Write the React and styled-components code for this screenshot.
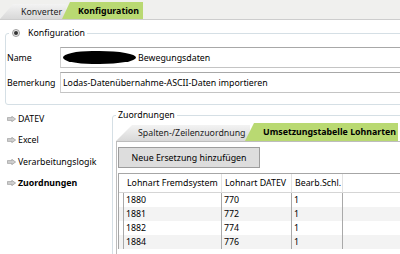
import React from 'react';
import styled, { createGlobalStyle } from 'styled-components';

const Global = createGlobalStyle`
  html, body { margin: 0; padding: 0; background: #fff; }
  body { font-family: "Noto Sans", "Open Sans", sans-serif; font-size: 8.8px; color: #000; overflow: hidden; }
  * { box-sizing: border-box; }
`;

const Screen = styled.div`
  width: 400px;
  height: 254px;
  overflow: hidden;
  display: flex;
  flex-direction: column;
  background: #fff;
`;

const TabStrip = styled.div`
  flex: none;
  height: ${p => p.$h}px;
  display: flex;
  align-items: flex-end;
  background: ${p => p.$bg || 'transparent'};
  border-bottom: ${p => (p.$line ? '1px solid #cdcdcd' : 'none')};
`;

const Tab = styled.div`
  flex: none;
  height: ${p => p.$h}px;
  width: ${p => p.$w}px;
  margin-left: ${p => p.$ml || 0}px;
  padding-left: ${p => p.$pl}px;
  display: flex;
  align-items: center;
  white-space: nowrap;
  clip-path: polygon(${p => p.$slant}px 0, 100% 0, 100% 100%, 0 100%);
  background: ${p => (p.$active ? '#b9d972' : 'linear-gradient(#f3f3f3, #d8d8d8)')};
  font-weight: ${p => (p.$active ? 700 : 400)};
  color: ${p => (p.$active ? '#000' : '#222')};
`;

const Group = styled.fieldset`
  flex: none;
  min-width: 0;
  margin: ${p => p.$margin};
  padding: ${p => p.$padding};
  border: 1px solid #d5dfe5;
  border-radius: 3px;
`;

const PanelGroup = styled(Group)`
  flex: 1;
  display: flex;
  flex-direction: column;
`;

const Legend = styled.legend`
  display: flex;
  align-items: center;
  height: 14px;
  line-height: 14px;
  margin-left: ${p => p.$ml}px;
  padding: ${p => p.$pad};
  white-space: nowrap;
`;

const EyeIcon = styled.svg`
  width: 8px;
  height: 8px;
  margin-right: 8px;
  flex: none;
`;

const FormRows = styled.div`
  display: flex;
  flex-direction: column;
  gap: 4px;
`;

const FormRow = styled.div`
  display: flex;
  align-items: center;
  height: 21px;
`;

const Label = styled.div`
  width: 53px;
  flex: none;
`;

const Field = styled.div`
  flex: 1;
  height: 100%;
  display: flex;
  align-items: center;
  padding-left: 2px;
  border: 1px solid #d0d0d0;
  border-top-color: #a8a8a8;
  border-bottom-color: #c4c4c4;
  white-space: nowrap;
  background: #fff;
`;

const Redacted = styled.span`
  display: inline-block;
  width: 73px;
  height: 13px;
  background: #000;
  border-radius: 40% 50% 50% 40% / 50%;
  margin-right: 2px;
  flex: none;
`;

const Body = styled.div`
  flex: 1;
  display: flex;
  margin-top: 3px;
  min-height: 0;
`;

const Nav = styled.nav`
  width: 112px;
  flex: none;
  display: flex;
  flex-direction: column;
`;

const NavItem = styled.div`
  height: 21.5px;
  display: flex;
  align-items: center;
  padding-left: 7px;
  gap: 2px;
  font-weight: ${p => (p.$current ? 700 : 400)};
  white-space: nowrap;
`;

const ArrowIcon = styled.svg`
  width: 9px;
  height: 6px;
  flex: none;
`;

const TabPanel = styled.div`
  border-left: 1px solid #bdbdbd;
  border-top: 1px solid #bdbdbd;
  padding: 5px 0 0 1px;
  display: flex;
  flex-direction: column;
  align-items: flex-start;
  gap: 5px;
  flex: 1;
`;

const Button = styled.button`
  width: 142px;
  height: 21px;
  font: inherit;
  color: #000;
  background: #dddddd;
  border: 1px solid #9d9d9d;
  padding: 0;
  white-space: nowrap;
`;

const Grid = styled.div`
  align-self: stretch;
  border-left: 1px solid #a6a6a6;
  border-top: 1px solid #a6a6a6;
  display: grid;
  grid-template-columns: 5px 98px 70px 51px 1fr;
`;

const HeadCell = styled.div`
  height: 19px;
  display: flex;
  align-items: center;
  padding-left: 3px;
  white-space: nowrap;
  overflow: hidden;
  border-bottom: 1px solid #d5d5d5;
  border-right: ${p => (p.$sep ? '1px solid #e3e3e3' : 'none')};
`;

const Cell = styled.div`
  height: 14px;
  display: flex;
  align-items: center;
  padding-left: 2px;
  white-space: nowrap;
  background: ${p => (p.$alt ? '#f3f3f3' : '#fff')};
  border-right: ${p => (p.$sep ? '1px solid #a9a9a9' : 'none')};
`;

const rows = [
  ['1880', '770', '1'],
  ['1881', '772', '1'],
  ['1882', '774', '1'],
  ['1884', '776', '1'],
];

const Arrow = () => (
  <ArrowIcon viewBox="0 0 9 6">
    <polygon points="0.4,1.6 4.8,1.6 4.8,0.3 8.6,3 4.8,5.7 4.8,4.4 0.4,4.4" fill="#cfcfcf" stroke="#8e8e8e" strokeWidth="0.6" />
  </ArrowIcon>
);

export default function App() {
  return (
    <Screen>
      <Global />
      <TabStrip $h={20} $bg="#f0f0ee" $line>
        <Tab $h={15} $w={66} $pl={21} $slant={13}>Konverter</Tab>
        <Tab $h={17} $w={81} $ml={-4} $pl={16} $slant={8} $active>Konfiguration</Tab>
      </TabStrip>

      <Group $margin="6px -20px 0 5px" $padding="7px 0 11px 1px">
        <Legend $ml={2} $pad="0 2px 0 3px">
          <EyeIcon viewBox="0 0 8 8">
            <circle cx="4" cy="4" r="3.5" fill="#e9e9e9" stroke="#8a8a8a" strokeWidth="0.8" />
            <circle cx="4" cy="4" r="2" fill="#333" />
          </EyeIcon>
          Konfiguration
        </Legend>
        <FormRows>
          <FormRow>
            <Label>Name</Label>
            <Field>
              <Redacted />
              Bewegungsdaten
            </Field>
          </FormRow>
          <FormRow>
            <Label>Bemerkung</Label>
            <Field>Lodas-Datenübernahme-ASCII-Daten importieren</Field>
          </FormRow>
        </FormRows>
      </Group>

      <Body>
        <Nav>
          <NavItem><Arrow />DATEV</NavItem>
          <NavItem><Arrow />Excel</NavItem>
          <NavItem><Arrow />Verarbeitungslogik</NavItem>
          <NavItem $current><Arrow />Zuordnungen</NavItem>
        </Nav>
        <PanelGroup $margin="0 -20px -20px 0" $padding="1px 0 0 3px">
          <Legend $ml={0} $pad="0 2px">Zuordnungen</Legend>
          <TabStrip $h={18}>
            <Tab $h={16} $w={134} $pl={22} $slant={16}>Spalten-/Zeilenzuordnung</Tab>
            <Tab $h={18} $w={153} $ml={-5} $pl={18} $slant={9} $active>Umsetzungstabelle Lohnarten</Tab>
          </TabStrip>
          <TabPanel>
            <Button>Neue Ersetzung hinzufügen</Button>
            <Grid>
              <HeadCell />
              <HeadCell $sep>Lohnart Fremdsystem</HeadCell>
              <HeadCell $sep>Lohnart DATEV</HeadCell>
              <HeadCell $sep>Bearb.Schl.</HeadCell>
              <HeadCell />
              {rows.map((r, i) => (
                <React.Fragment key={r[0]}>
                  <Cell $sep $alt={i % 2 === 1} />
                  <Cell $sep $alt={i % 2 === 1}>{r[0]}</Cell>
                  <Cell $sep $alt={i % 2 === 1}>{r[1]}</Cell>
                  <Cell $sep $alt={i % 2 === 1}>{r[2]}</Cell>
                  <Cell $alt={i % 2 === 1} />
                </React.Fragment>
              ))}
            </Grid>
          </TabPanel>
        </PanelGroup>
      </Body>
    </Screen>
  );
}
